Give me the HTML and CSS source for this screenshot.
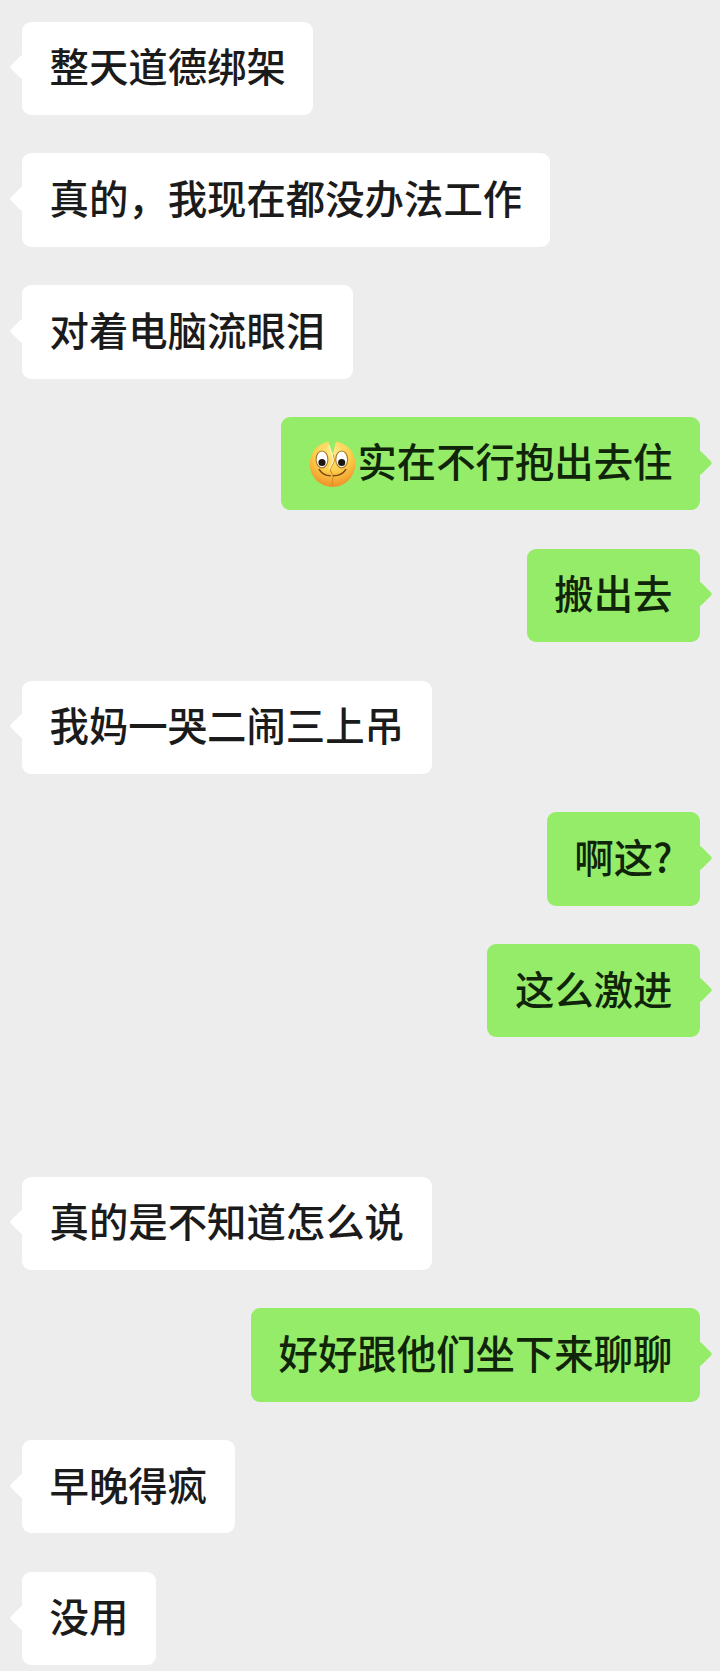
FILE: index.html
```html
<!DOCTYPE html>
<html lang="zh-CN">
<head>
<meta charset="utf-8">
<title>聊天记录</title>
<link rel="stylesheet" href="styles.css">
</head>
<body>
<main class="chat">
  <div class="row"><div class="bubble in">整天道德绑架</div></div>
  <div class="row"><div class="bubble in">真的，我现在都没办法工作</div></div>
  <div class="row"><div class="bubble in">对着电脑流眼泪</div></div>
  <div class="row out"><div class="bubble me">
    <svg class="emoji" viewBox="0 0 48 48" aria-hidden="true">
      <defs>
        <radialGradient id="face" cx="50%" cy="25%" r="72%">
          <stop offset="0" stop-color="#ffec8c"/>
          <stop offset="0.55" stop-color="#fdcf4c"/>
          <stop offset="1" stop-color="#f0962a"/>
        </radialGradient>
      </defs>
      <circle cx="24" cy="24.5" r="22.4" fill="url(#face)"/>
      <path d="M20 0 L28 0 L26 8 L24.5 15 L21 8 Z" fill="#95ec69"/>
      <path d="M24.5 15 L26 21 L21.5 30 L24.5 36 L23.5 47" fill="none" stroke="#d98f22" stroke-width="1.1"/>
      <path d="M20.5 6 L23.5 15 L25 21 L20.5 30" fill="none" stroke="#fff6c4" stroke-width="1.2"/>
      <ellipse cx="13.7" cy="20" rx="5.8" ry="8.3" fill="#fff" stroke="#a8792a" stroke-width="1.1"/>
      <ellipse cx="33" cy="20" rx="5.8" ry="8.3" fill="#fff" stroke="#a8792a" stroke-width="1.1"/>
      <circle cx="13.7" cy="23" r="3.5" fill="#1d1510"/>
      <circle cx="33" cy="23" r="3.5" fill="#1d1510"/>
      <path d="M11 30 Q15 36 21.7 36" fill="none" stroke="#7a4a12" stroke-width="1.6" stroke-linecap="round"/>
      <path d="M25 36 Q33 36 37 30" fill="none" stroke="#7a4a12" stroke-width="1.6" stroke-linecap="round"/>
    </svg>实在不行抱出去住</div></div>
  <div class="row out"><div class="bubble me">搬出去</div></div>
  <div class="row"><div class="bubble in">我妈一哭二闹三上吊</div></div>
  <div class="row out"><div class="bubble me">啊这?</div></div>
  <div class="row out"><div class="bubble me">这么激进</div></div>
  <div class="row wide"><div class="bubble in">真的是不知道怎么说</div></div>
  <div class="row out"><div class="bubble me">好好跟他们坐下来聊聊</div></div>
  <div class="row"><div class="bubble in">早晚得疯</div></div>
  <div class="row"><div class="bubble in">没用</div></div>
</main>
</body>
</html>
```
FILE: styles.css
```css
* { box-sizing: border-box; }
html, body { margin: 0; padding: 0; }
body {
  background: #ededed;
  font-family: "Noto Sans CJK SC", "Noto Sans", sans-serif;
  width: 720px;
  height: 1671px;
  overflow: hidden;
}
.chat {
  display: flex;
  flex-direction: column;
  gap: 38.4px;
  padding: 21.6px 20px 0 22px;
}
.row { display: flex; justify-content: flex-start; }
.row.out { justify-content: flex-end; }
.row.wide { margin-top: 100.7px; }
.bubble {
  position: relative;
  display: flex;
  align-items: center;
  height: 93.4px;
  padding: 0 27.5px 7px;
  border-radius: 9px;
  font-size: 39.4px;
  font-weight: 500;
  line-height: 1;
  white-space: nowrap;
}
.bubble::before {
  content: "";
  position: absolute;
  top: 50%;
  width: 18px;
  height: 18px;
  margin-top: -10px;
  border-radius: 3px;
  background: inherit;
  transform: rotate(45deg);
}
.in { background: #fff; color: #1b1b1b; }
.in::before { left: -9px; }
.me { background: #95ec69; color: #10240a; }
.me::before { right: -9px; }
.emoji { width: 49px; height: 49px; flex: none; margin-top: 7px; }
```
